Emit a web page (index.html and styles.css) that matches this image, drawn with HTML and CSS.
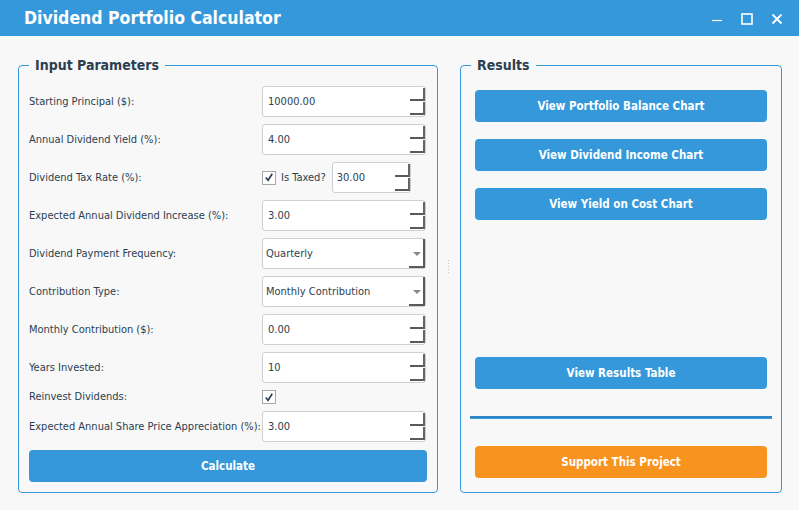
FILE: index.html
```html
<!DOCTYPE html>
<html>
<head>
<meta charset="utf-8">
<link rel="stylesheet" href="styles.css">
</head>
<body>
<div class="titlebar">
  <div class="title">Dividend Portfolio Calculator</div>
  <div class="winctl">
    <svg width="12" height="12" viewBox="0 0 12 12"><path d="M1 7.5H11" stroke="#fff" stroke-width="1.2"/></svg>
    <svg width="12" height="12" viewBox="0 0 12 12"><rect x="1" y="1" width="10" height="10" fill="none" stroke="#fff" stroke-width="1.6"/></svg>
    <svg width="12" height="12" viewBox="0 0 12 12"><path d="M1.5 1.5L10.5 10.5M10.5 1.5L1.5 10.5" stroke="#fff" stroke-width="1.8"/></svg>
  </div>
</div>
<div class="main">
  <fieldset class="group inputs">
    <legend>Input Parameters</legend>
    <div class="form">
      <label>Starting Principal ($):</label>
      <div class="field"><span>10000.00</span><div class="spin"><i></i><i></i></div></div>

      <label>Annual Dividend Yield (%):</label>
      <div class="field"><span>4.00</span><div class="spin"><i></i><i></i></div></div>

      <label>Dividend Tax Rate (%):</label>
      <div class="taxrow">
        <span class="check"><svg viewBox="0 0 13 13" width="13" height="13"><path d="M3 6.5L5.5 9.5L10 2.5" fill="none" stroke="#2c3e50" stroke-width="1.8"/></svg></span>
        <span class="taxlbl">Is Taxed?</span>
        <div class="field small"><span>30.00</span><div class="spin"><i></i><i></i></div></div>
      </div>

      <label>Expected Annual Dividend Increase (%):</label>
      <div class="field"><span>3.00</span><div class="spin"><i></i><i></i></div></div>

      <label>Dividend Payment Frequency:</label>
      <div class="field combo"><span>Quarterly</span><div class="drop"><b></b></div></div>

      <label>Contribution Type:</label>
      <div class="field combo"><span>Monthly Contribution</span><div class="drop"><b></b></div></div>

      <label>Monthly Contribution ($):</label>
      <div class="field"><span>0.00</span><div class="spin"><i></i><i></i></div></div>

      <label>Years Invested:</label>
      <div class="field"><span>10</span><div class="spin"><i></i><i></i></div></div>

      <label class="short">Reinvest Dividends:</label>
      <div class="short"><span class="check"><svg viewBox="0 0 13 13" width="13" height="13"><path d="M3 6.5L5.5 9.5L10 2.5" fill="none" stroke="#2c3e50" stroke-width="1.8"/></svg></span></div>

      <label>Expected Annual Share Price Appreciation (%):</label>
      <div class="field"><span>3.00</span><div class="spin"><i></i><i></i></div></div>
    </div>
    <button class="btn calc">Calculate</button>
  </fieldset>
  <div class="splitter"></div>
  <fieldset class="group results">
    <legend>Results</legend>
    <button class="btn">View Portfolio Balance Chart</button>
    <button class="btn">View Dividend Income Chart</button>
    <button class="btn">View Yield on Cost Chart</button>
    <div class="spacer"></div>
    <button class="btn">View Results Table</button>
    <div class="sep"></div>
    <button class="btn orange">Support This Project</button>
  </fieldset>
</div>
</body>
</html>
```
FILE: styles.css
```css
* { box-sizing: border-box; }
html, body { margin: 0; padding: 0; }
body {
  width: 799px; height: 510px; overflow: hidden;
  background: #f8f8f8;
  font-family: "DejaVu Sans Condensed", "DejaVu Sans", sans-serif;
  font-stretch: condensed;
  font-size: 11px;
  color: #2c3e50;
}
.titlebar {
  height: 36px; background: #3498db;
  display: flex; align-items: center; justify-content: space-between;
  padding: 0 16px 0 24px;
}
.title { color: #fff; font-weight: bold; font-size: 17.5px; }
.winctl { display: flex; gap: 18px; align-items: center; margin-top: 1px; }
.winctl svg { display: block; }
.main {
  display: flex; padding: 0 17px 0 18px; margin-top: 21px;
}
.group {
  margin: 0; border: 1px solid #3498db; border-radius: 4px;
  padding: 0 10px 10px 10px; min-width: 0;
  height: 436px;
}
.group legend {
  font-weight: bold; font-size: 14px; padding: 0 6px; margin: 0;
  color: #2c3e50; line-height: 17px;
}
.results legend { margin-left: -4px; }
.inputs { width: 420px; display: flex; flex-direction: column; }
.splitter { width: 22px; position: relative; }
.splitter::after {
  content: ""; position: absolute; left: 10px; top: 203px; width: 1px; height: 14px;
  background: repeating-linear-gradient(#c8c8c8 0 1px, transparent 1px 3px);
}
.results {
  width: 322px; display: flex; flex-direction: column; padding: 0 14px 14px 14px;
}
.form {
  display: grid; grid-template-columns: 233px 164px; row-gap: 7px;
  margin-top: 12px; align-items: center;
}
.form label { height: 31px; line-height: 31px; white-space: nowrap; }
.form label.short, .form div.short { height: 14px; line-height: 14px; }
.field {
  height: 31px; background: #fff; border: 1px solid #cfcfcf; border-radius: 3px;
  display: flex; align-items: center; justify-content: space-between;
  padding-left: 5px; font-size: 11px;
}
.field.small { width: 79px; padding-left: 4px; }
.spin { width: 15px; height: 29px; display: flex; flex-direction: column; justify-content: space-between; padding: 1px 0; margin-right: 0; }
.spin i { display: block; height: 13px; border-right: 2px solid #5a5a5a; border-bottom: 2px solid #5a5a5a; border-right-color: #666; }
.combo { padding-left: 3px; }
.drop { width: 16px; height: 29px; border-right: 2px solid #5a5a5a; border-bottom: 2px solid #5a5a5a; position: relative; }
.drop b {
  position: absolute; left: 4px; top: 13px; width: 0; height: 0;
  border-left: 4px solid transparent; border-right: 4px solid transparent; border-top: 4px solid #888;
}
.taxrow { display: flex; align-items: center; height: 31px; }
.check {
  width: 14px; height: 14px; border: 1px solid #a8a8a8; background: #fff; display: inline-flex;
  align-items: center; justify-content: center;
}
.check svg { display: block; }
.taxlbl { margin: 0 6px 0 5px; }
.btn {
  display: block; width: 100%; height: 32px; border: none; border-radius: 4px;
  background: #3498db; color: #fff; font-weight: bold;
  font-family: "DejaVu Sans Condensed", "DejaVu Sans", sans-serif; font-stretch: condensed;
  font-size: 11.5px; padding: 0;
}
.calc { margin-top: 8px; width: 398px; }
.results .btn { margin-top: 17px; }
.results .btn:first-of-type { margin-top: 16px; }
.spacer { flex: 1; }
.sep { background: #2f86c8; margin: 27px -5px 0 -5px; border-bottom: 1px solid #3a9be0; height: 3px; }
.results .btn.orange { background: #f7931e; margin-top: 27px; }
```
